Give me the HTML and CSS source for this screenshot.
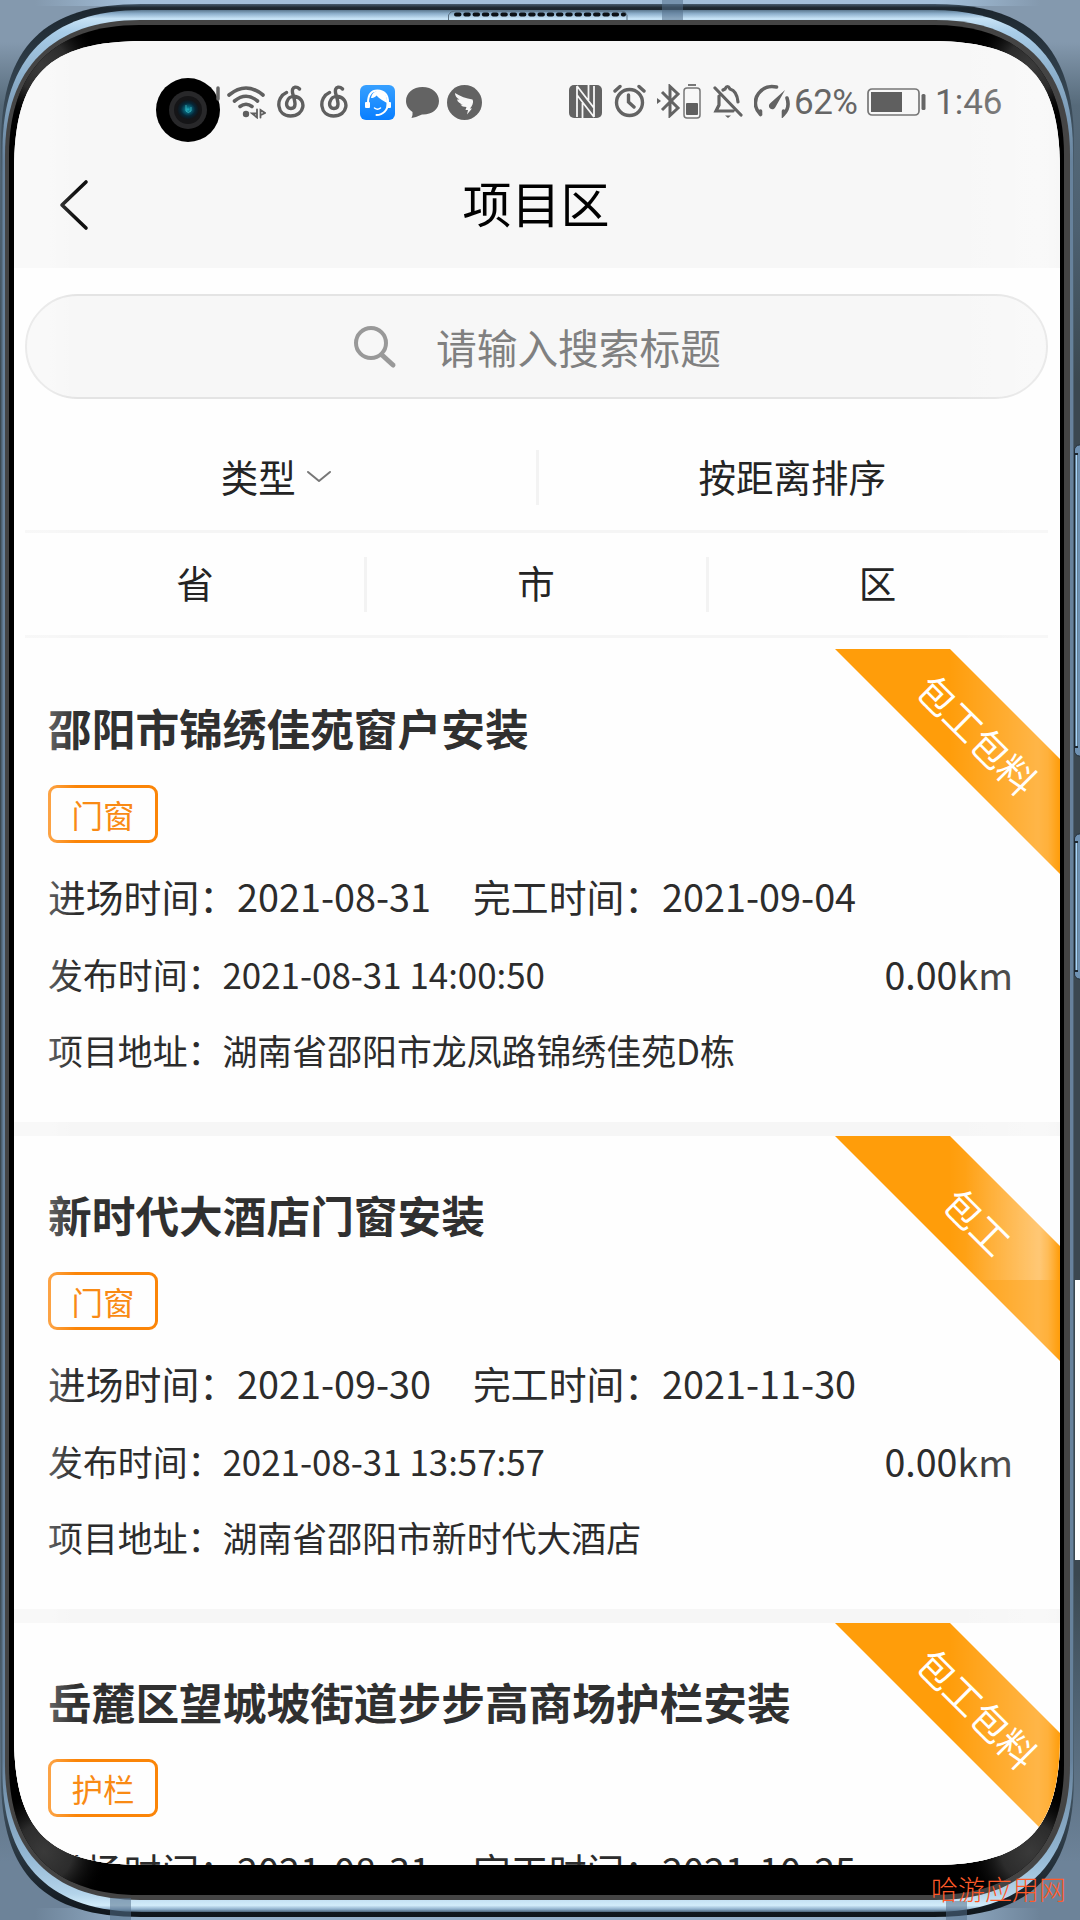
FILE: index.html
```html
<!DOCTYPE html>
<html lang="zh-CN">
<head>
<meta charset="utf-8">
<title>项目区</title>
<link rel="stylesheet" href="styles.css">
</head>
<body>
<div class="device">
  <svg class="frame" viewBox="0 0 1080 1920" width="1080" height="1920" aria-hidden="true">
    <defs>
      <linearGradient id="backdrop" x1="0" y1="0" x2="0" y2="1">
        <stop offset="0" stop-color="#8499ae"/><stop offset=".022" stop-color="#8499ae"/>
        <stop offset=".055" stop-color="#566a7a"/><stop offset=".12" stop-color="#4d6070"/>
        <stop offset=".2" stop-color="#3b4850"/><stop offset=".82" stop-color="#3b4850"/>
        <stop offset=".88" stop-color="#4d6070"/><stop offset=".97" stop-color="#6d8399"/><stop offset="1" stop-color="#6d8399"/>
      </linearGradient>
      <linearGradient id="edgeBlue" x1="0" y1="0" x2="1" y2="0">
        <stop offset="0" stop-color="#a3bfd9" stop-opacity="0"/><stop offset=".1" stop-color="#a3bfd9"/>
        <stop offset=".9" stop-color="#a3bfd9"/><stop offset="1" stop-color="#a3bfd9" stop-opacity="0"/>
      </linearGradient>
      <linearGradient id="rim" gradientUnits="userSpaceOnUse" x1="0" y1="2" x2="0" y2="1919">
        <stop offset="0" stop-color="#5f7990"/><stop offset=".003" stop-color="#1c262e"/><stop offset=".03" stop-color="#2c3a45"/>
        <stop offset=".09" stop-color="#4c6070"/><stop offset=".92" stop-color="#4c6070"/><stop offset=".97" stop-color="#26323c"/><stop offset="1" stop-color="#0e1419"/>
      </linearGradient>
      <linearGradient id="metal" gradientUnits="userSpaceOnUse" x1="0" y1="9" x2="0" y2="1913">
        <stop offset="0" stop-color="#4f6a80"/><stop offset=".0025" stop-color="#8eb0cc"/><stop offset=".005" stop-color="#c6e2f5"/>
        <stop offset=".012" stop-color="#a9cde8"/><stop offset=".035" stop-color="#8db0cc"/><stop offset=".08" stop-color="#67829c"/><stop offset=".92" stop-color="#67829c"/>
        <stop offset=".97" stop-color="#94b8d4"/><stop offset=".99" stop-color="#b4d4ea"/><stop offset=".996" stop-color="#d2ecfa"/><stop offset=".998" stop-color="#8fb0cc"/><stop offset="1" stop-color="#34495a"/>
      </linearGradient>
      <radialGradient id="sheen"><stop offset="0" stop-color="#3a3a3a"/><stop offset=".45" stop-color="#2c2c2c"/><stop offset="1" stop-color="#000" stop-opacity="0"/></radialGradient>
      <clipPath id="glass"><path d="M9 155C9 71 55 25 139 25H934C1018 25 1064 71 1064 155V1765C1064 1849 1018 1895 934 1895H139C55 1895 9 1849 9 1765Z"/></clipPath>
    </defs>
    <rect width="1080" height="1920" fill="url(#backdrop)"/>
    <rect x="35" width="1005" height="6" fill="url(#edgeBlue)"/>
    <rect x="35" y="1908" width="1005" height="12" fill="url(#edgeBlue)" opacity=".75"/>
    <rect x="1075" y="1280" width="5" height="280" fill="#fff"/>
    <path fill="url(#rim)" d="M1 144C1 47 44 4 141 4H934C1031 4 1074 47 1074 144V1777C1074 1874 1031 1917 934 1917H141C44 1917 1 1874 1 1777Z"/>
    <path fill="url(#metal)" d="M2.500 150C2.500 58 50 10 142 10H932C1024 10 1073 58 1073 150V1772C1073 1864 1024 1912 932 1912H142C50 1912 2.500 1864 2.500 1772Z"/>
    <path fill="#444" d="M5 155C5 68 53 20 140 20H935C1022 20 1070 68 1070 155V1765C1070 1852 1022 1900 935 1900H140C53 1900 5 1852 5 1765Z"/>
    <path fill="#000" d="M9 155C9 71 55 25 139 25H934C1018 25 1064 71 1064 155V1765C1064 1849 1018 1895 934 1895H139C55 1895 9 1849 9 1765Z"/>
    <g clip-path="url(#glass)" fill="url(#sheen)">
      <circle cx="42" cy="66" r="58"/><circle cx="1032" cy="66" r="58"/>
      <circle cx="44" cy="1852" r="64"/><circle cx="1030" cy="1852" r="64"/>
    </g>
    <path d="M448.500 20V15Q450 11 455 11H621Q626 11 627 15V20" fill="none" stroke="#5b7182"/>
    <path d="M456 14.500H624" stroke="#0c1116" stroke-width="4" stroke-dasharray="3.500 5.770" stroke-linecap="round" fill="none"/>
    <g fill="#54708a" opacity=".55"><rect x="662" width="21" height="20"/><rect x="110" y="1898" width="21" height="22"/><rect x="946" y="1901" width="21" height="19"/></g>
    <g>
      <rect x="1074.500" y="445" width="12" height="311" rx="5" fill="#6f92b3" stroke="#25303a"/>
      <rect x="1074" y="453" width="4" height="295" fill="#1d2831"/><rect x="1075.500" y="455" width="2" height="291" fill="#a9d6fa"/>
      <rect x="1074.500" y="834" width="12" height="145" rx="5" fill="#6f92b3" stroke="#25303a"/>
      <rect x="1074" y="841" width="4" height="131" fill="#1d2831"/><rect x="1075.500" y="843" width="2" height="127" fill="#a9d6fa"/>
    </g>
  </svg>

  <main class="screen">
    <header class="header">
      <div class="status">
        <div class="status-left">
          <svg class="camera" width="64" height="64" viewBox="0 0 64 64">
            <defs><radialGradient id="lens"><stop offset="0" stop-color="#1fb4c4"/><stop offset=".25" stop-color="#086a80"/><stop offset=".65" stop-color="#052637"/><stop offset="1" stop-color="#131316"/></radialGradient></defs>
            <circle cx="32" cy="32" r="32"/><circle cx="32" cy="32" r="19" fill="#28282a"/><circle cx="32" cy="32" r="14" fill="#151517"/>
            <ellipse cx="32" cy="31.500" rx="11" ry="10" fill="url(#lens)"/><path d="M30 27v6q2 3 5 0v-4" fill="none" stroke="#54d8dc" opacity=".6"/>
          </svg>
          <svg class="signal" width="4" height="34" viewBox="0 0 4 34"><path d="M2 3V14" stroke="#666" stroke-width="3.500" stroke-linecap="round"/></svg>
          <svg class="wifi" width="39" height="34" viewBox="0 0 39 34" fill="none" stroke="#5f5f5f" stroke-width="3.600" stroke-linecap="round">
            <path d="M2 10Q19 -4 36 10M7.500 16Q19 6.500 30.500 16M13 21.500Q19 17 25 21.500"/><circle cx="19" cy="29" r="3.200" fill="#5f5f5f" stroke="none"/>
            <path d="M30 24.500V32.500L25 28.500H30M33.500 32.500V25L38 28L34 30" stroke-width="1.800"/>
          </svg>
          <svg class="music" width="28" height="34" viewBox="0 0 28 34" fill="none" stroke="#5f5f5f" stroke-width="3.400" stroke-linecap="round">
            <path d="M9.500 7.500C-2 12.500 -.5 31 13.500 31C28 31 30 14 18.500 11.500C9 10 6.500 23.500 14 23.500C20.500 23.500 17.500 15 16 9.500C14.500 4.500 16 2.500 18 2.200C20.500 1.800 21.500 3 22.500 4"/>
          </svg>
          <svg class="music second" width="28" height="34" viewBox="0 0 28 34" fill="none" stroke="#5f5f5f" stroke-width="3.400" stroke-linecap="round">
            <path d="M9.500 7.500C-2 12.500 -.5 31 13.500 31C28 31 30 14 18.500 11.500C9 10 6.500 23.500 14 23.500C20.500 23.500 17.500 15 16 9.500C14.500 4.500 16 2.500 18 2.200C20.500 1.800 21.500 3 22.500 4"/>
          </svg>
          <svg class="service" width="35" height="35" viewBox="0 0 35 35">
            <defs><linearGradient id="sky" x1="0" y1="0" x2="0" y2="1"><stop offset="0" stop-color="#37a0ff"/><stop offset="1" stop-color="#087eff"/></linearGradient></defs>
            <rect width="35" height="35" rx="6" fill="url(#sky)"/>
            <path d="M11 13C12 8 15 6 18 6C24 6 27.500 10 27 18C24 16 19 14 16.500 10.500C15 12.500 13 13 11 13Z" fill="#fff"/>
            <path d="M8 18C8 9 12 5.500 17.500 5.500C24 5.500 28.500 10 28 18C28 25 23 30 16.500 30" fill="none" stroke="#fff" stroke-width="2" stroke-linecap="round"/>
            <rect x="5" y="17" width="5" height="6" rx="1" fill="#fff"/><rect x="26.500" y="17" width="4.500" height="6" rx="1" fill="#fff"/><path d="M14.500 23Q17.500 25.500 20.500 23" fill="none" stroke="#fff" stroke-width="1.500" stroke-linecap="round"/>
          </svg>
          <svg class="bubble" width="33" height="32" viewBox="0 0 33 32"><path d="M16.500 0C26 0 33 6 33 14C33 23 25 28 16 27.500Q11 30 5.500 31Q7 28 6.500 25C2 22 0 18 0 14C0 6 7 0 16.500 0Z" fill="#636363"/></svg>
          <svg class="wing" width="35" height="35" viewBox="0 0 35 35"><circle cx="17.500" cy="17.500" r="17.500" fill="#636363"/><path d="M8 8Q16 13 25.500 14.500Q27 17 24.500 21.500L23 23.500H25L20 29.500L21 25H18.500L19.500 22Q15 22 13.500 19.500H16Q11 18 10 14.500H12.500Q8 12 8 8Z" fill="#f7f7f7"/></svg>
        </div>
        <div class="status-right">
          <svg width="33" height="33" viewBox="0 0 33 33"><rect width="33" height="33" rx="5" fill="#636363"/><path d="M8 1V32M25 1V32M8 1L25 23M8 10L25 32M13.500 18V33M19.500 0V15" fill="none" stroke="#f7f7f7" stroke-width="1.800"/></svg>
          <svg class="alarm" width="33" height="34" viewBox="0 0 33 34" fill="none" stroke="#636363" stroke-width="3.400" stroke-linecap="round"><circle cx="16.500" cy="18.500" r="13"/><path d="M2 7L7 2.500M26 2.500L31 7M15.500 11V18L21 23"/></svg>
          <svg class="bluetooth" width="24" height="34" viewBox="0 0 24 34" fill="none" stroke="#636363" stroke-width="3"><path d="M5 8L21 24L13 31.500V2.500L21 10L5 26"/><path d="M0 14L4 17L0 20Z" fill="#636363" stroke="none"/></svg>
          <svg class="cell" width="18" height="35" viewBox="0 0 18 35"><rect x="5" width="8" height="2" fill="#777"/><rect x="1" y="4" width="16" height="30" rx="3" fill="none" stroke="#777" stroke-width="1.500"/><rect x="3" y="19" width="12" height="12" rx="1" fill="#5f5f5f"/></svg>
          <svg class="bell" width="30" height="34" viewBox="0 0 30 34" fill="none" stroke="#636363" stroke-width="3.200" stroke-linecap="round"><path d="M2 4L28 31M6 12V21L3 27H20M10 6L12 5Q14.500 0 17 5Q24 7 25 18"/><path d="M12 31.500H18L15 34Z" fill="#636363" stroke="none"/></svg>
          <svg class="gauge" width="36" height="34" viewBox="0 0 36 34" fill="none" stroke="#636363" stroke-width="3.600" stroke-linecap="round"><path d="M6.500 30.500C-1 23 1 14 4.500 9.500C9 3.500 15.500 1.500 22.500 3M6.500 30.500V27M33 14C35 20 34 26 29.500 30.500V27"/><path d="M31 6L16.500 19A3.400 3.400 0 1 0 21.500 23Z" fill="#636363" stroke="none"/></svg>
          <span class="percent">62%</span>
          <svg class="battery" width="59" height="28" viewBox="0 0 59 28"><rect x="1" y="1" width="51" height="26" rx="4" fill="none" stroke="#777" stroke-width="1.700"/><rect x="4" y="4" width="31" height="20" fill="#5f5f5f"/><rect x="54.500" y="6" width="4" height="16" rx="1.500" fill="#666"/></svg>
          <time class="clock">1:46</time>
        </div>
      </div>
      <div class="navbar">
        <svg class="back" width="30" height="52" viewBox="0 0 30 52" fill="none" stroke="#111" stroke-width="3.600" stroke-linecap="round" stroke-linejoin="round"><path d="M27 3L3 26L27 49"/></svg>
        <h1 class="page-title">项目区</h1>
      </div>
    </header>

    <div class="search">
      <svg width="44" height="44" viewBox="0 0 44 44" fill="none" stroke="#999" stroke-width="4"><circle cx="18" cy="18" r="15"/><path d="M29 30L40 40" stroke-width="5" stroke-linecap="round"/></svg>
      <span>请输入搜索标题</span>
    </div>

    <nav class="filters">
      <div class="filter-row two">
        <div class="filter type">类型<svg width="26" height="14" viewBox="0 0 26 14" fill="none" stroke="#777" stroke-width="2" stroke-linecap="round" stroke-linejoin="round"><path d="M2 2L13 11L24 2"/></svg></div>
        <div class="filter">按距离排序</div>
      </div>
      <div class="filter-row three">
        <div class="filter">省</div>
        <div class="filter">市</div>
        <div class="filter">区</div>
      </div>
    </nav>

    <section class="list">
      <article class="card">
        <div class="ribbon"><span>包工包料</span></div>
        <h2 class="card-title">邵阳市锦绣佳苑窗户安装</h2>
        <span class="tag">门窗</span>
        <p class="dates"><span>进场时间：2021-08-31</span><span>完工时间：2021-09-04</span></p>
        <p class="posted"><span>发布时间：2021-08-31 14:00:50</span><span class="distance">0.00km</span></p>
        <p class="address">项目地址：湖南省邵阳市龙凤路锦绣佳苑D栋</p>
      </article>
      <article class="card">
        <div class="ribbon faded"><span>包工</span></div>
        <h2 class="card-title">新时代大酒店门窗安装</h2>
        <span class="tag">门窗</span>
        <p class="dates"><span>进场时间：2021-09-30</span><span>完工时间：2021-11-30</span></p>
        <p class="posted"><span>发布时间：2021-08-31 13:57:57</span><span class="distance">0.00km</span></p>
        <p class="address">项目地址：湖南省邵阳市新时代大酒店</p>
      </article>
      <article class="card">
        <div class="ribbon"><span>包工包料</span></div>
        <h2 class="card-title">岳麓区望城坡街道步步高商场护栏安装</h2>
        <span class="tag">护栏</span>
        <p class="dates"><span>进场时间：2021-08-31</span><span>完工时间：2021-10-25</span></p>
      </article>
    </section>
  </main>
  <div class="watermark">哈游应用网</div>
</div>
</body>
</html>
```
FILE: styles.css
```css
* { box-sizing: border-box; }

body {
  margin: 0;
  font-family: "Noto Sans CJK SC", sans-serif;
  color: #2c2c2c;
}

h1, h2, p { margin: 0; font-weight: 400; }
svg { display: block; flex: none; }

.device {
  position: relative;
  width: 1080px;
  height: 1920px;
  overflow: hidden;
  padding: 41px 20px 55px 14px;
}

.frame { position: absolute; inset: 0; }

.screen {
  position: relative;
  display: flex;
  flex-direction: column;
  width: 1046px;
  height: 1824px;
  overflow: hidden;
  background: #fefefe;
  clip-path: path("M0 130C0 34 34 0 130 0H916C1012 0 1046 34 1046 130V1694C1046 1790 1012 1824 916 1824H130C34 1824 0 1790 0 1694Z");
}

/* soft glass reflection along both sides of the display */
.screen::after {
  content: "";
  position: absolute;
  inset: 0;
  pointer-events: none;
  background: linear-gradient(90deg, rgba(255,255,255,.25) 0, rgba(255,255,255,.25) 35px, transparent 62px, transparent 935px, rgba(255,255,255,.25) 1024px, rgba(255,255,255,.2) 1034px, transparent 1046px);
}

.header { flex: none; height: 227px; background: #f7f7f7; }

.status {
  display: flex;
  justify-content: space-between;
  height: 102px;
  padding: 37px 60px 0 142px;
}

.status-left, .status-right { display: flex; height: 64px; }
.status-left > svg { margin-top: 7px; }
.status-left > .camera { margin-top: 0; }
.status-left > .signal { margin-left: -4px; }
.wifi { margin-left: 7px; }
.music { margin-left: 11px; }
.music.second { margin-left: 15px; }
.service { margin-left: 12px; }
.status-left > .bubble { margin: 9px 0 0 11px; }
.wing { margin-left: 8px; }

.status-right { height: 46px; align-items: center; color: #666; font-family: Roboto, sans-serif; font-size: 35px; line-height: 46px; }
.alarm { margin-left: 11px; }
.bluetooth { margin-left: 11px; }
.cell { margin-left: 2px; }
.bell { margin-left: 12px; }
.gauge { margin-left: 11px; }
.percent { width: 61px; margin: 3px 0 0 4px; letter-spacing: -.5px; }
.battery { margin: 1px 0 0 12px; }
.clock { width: 64px; margin: 3px 1px 0 9px; }

.navbar {
  display: grid;
  grid-template-columns: 1fr auto 1fr;
  align-items: center;
  height: 122px;
  padding-left: 45px;
  padding-right: 47px;
}
.page-title { padding-bottom: 5px; font-size: 49px; line-height: 66px; color: #000; }
.back { margin-top: 1px; }

.search {
  flex: none;
  display: flex;
  align-items: center;
  height: 105px;
  margin: 26px 12px 27px 11px;
  padding-left: 326px;
  gap: 39px;
  border: 2px solid #e4e4e4;
  border-radius: 53px;
  background: #f7f7f7;
  color: #808080;
  font-size: 40.7px;
  line-height: 60px;
}

.filters { flex: none; margin: 0 12px 11px 11px; color: #242424; font-size: 37.5px; }
.filter-row { display: grid; border-bottom: 3px solid #f5f5f5; }
.filter-row.two { grid-template-columns: 1fr 1fr; height: 107px; }
.filter-row.three { grid-template-columns: 340px 342px 1fr; height: 105px; }
.filter { position: relative; display: flex; align-items: center; justify-content: center; gap: 10px; padding-bottom: 5px; }
.filter.type { padding-right: 9px; }
.filter.type svg { margin-top: 3px; }
.filter + .filter::before {
  content: "";
  position: absolute;
  left: -1px;
  top: 24px;
  width: 3px;
  height: 55px;
  background: #f3f3f3;
}

.list { display: flex; flex-direction: column; gap: 14px; background: #f6f6f6; }

.card {
  position: relative;
  flex: none;
  height: 473px;
  padding: 48px 47px 0 34px;
  background: #fefefe;
}
.card-title { font-size: 43.7px; font-weight: 700; line-height: 60px; color: #303030; }

.tag {
  display: flex;
  align-items: center;
  justify-content: center;
  width: 110px;
  height: 58px;
  margin: 28px 0 28px;
  border: 3px solid #fb8508;
  border-radius: 9px;
  color: #f98a14;
  font-size: 31.5px;
  line-height: 46px;
}

.dates { display: flex; gap: 42px; margin-bottom: 28px; font-size: 37.8px; line-height: 50px; white-space: nowrap; }
.posted { display: flex; justify-content: space-between; margin-bottom: 26px; font-size: 34.9px; line-height: 50px; }
.distance { font-size: 37.6px; }
.address { font-size: 34.9px; line-height: 50px; }

.ribbon {
  position: absolute;
  top: 0;
  right: 0;
  width: 225px;
  height: 225px;
  background: #ff9d0a;
  clip-path: polygon(0 0, 115px 0, 225px 110px, 225px 225px);
}
.ribbon.faded {
  background: linear-gradient(90deg, transparent 130px, rgba(255,255,255,.25) 205px, transparent 224px) 0 0 / 100% 144px no-repeat #ff9d0a;
}
.ribbon span {
  position: absolute;
  left: 143px;
  top: 85px;
  transform: translate(-50%, -50%) rotate(45deg);
  color: #fff;
  font-size: 37.6px;
  line-height: 48px;
  white-space: nowrap;
}

.watermark {
  position: absolute;
  right: 14px;
  bottom: 12px;
  color: #ff5a28;
  font-size: 27px;
  font-weight: 300;
  line-height: 38px;
}
```
